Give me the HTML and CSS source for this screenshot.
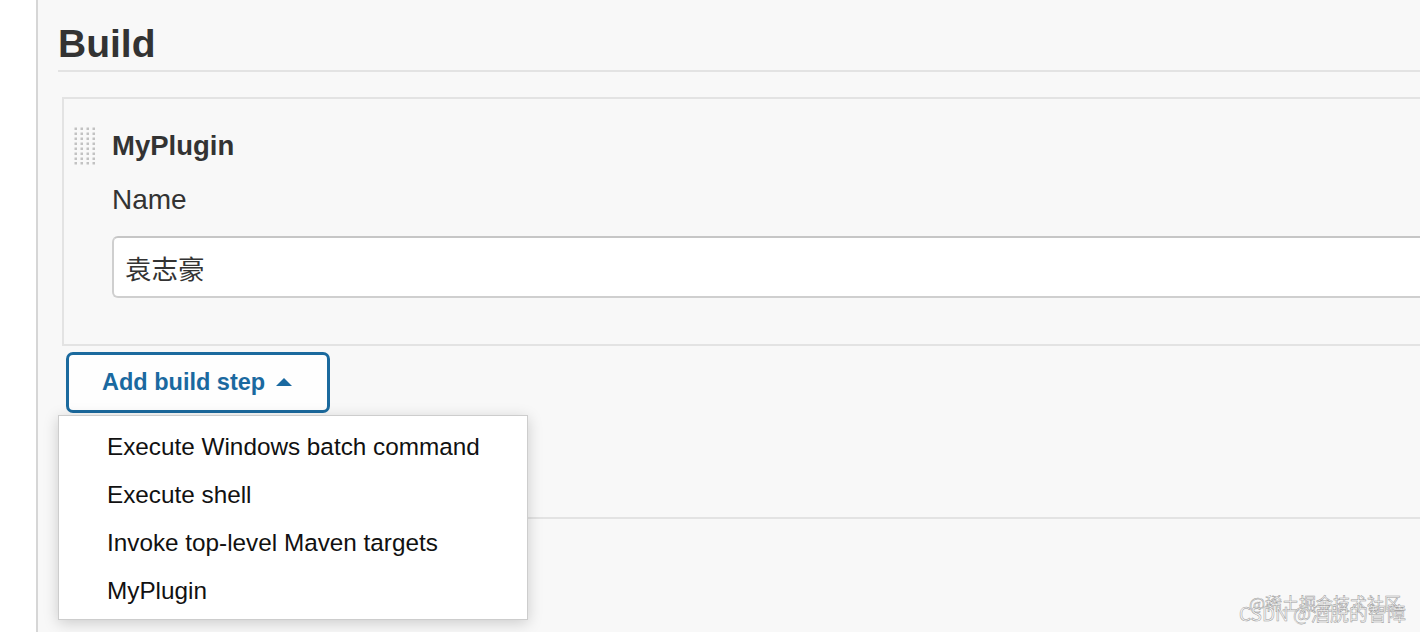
FILE: index.html
```html
<!DOCTYPE html>
<html lang="en">
<head>
<meta charset="utf-8">
<title>Build</title>
<link rel="stylesheet" href="styles.css">
</head>
<body>
<div class="layout">
  <aside class="sidebar"></aside>
  <main class="main">
    <h2 class="heading">Build</h2>
    <section class="panel">
      <div class="handle">
        <svg width="22" height="38" viewBox="0 0 22 38" aria-hidden="true">
          <g fill="#c2c2c2">
            <rect x="0.5" y="0.5" width="2.5" height="2.5"/><rect x="6.5" y="0.5" width="2.5" height="2.5"/><rect x="12.5" y="0.5" width="2.5" height="2.5"/><rect x="18.5" y="0.5" width="2.5" height="2.5"/>
            <rect x="0.5" y="5.5" width="2.5" height="2.5"/><rect x="6.5" y="5.5" width="2.5" height="2.5"/><rect x="12.5" y="5.5" width="2.5" height="2.5"/><rect x="18.5" y="5.5" width="2.5" height="2.5"/>
            <rect x="0.5" y="10.5" width="2.5" height="2.5"/><rect x="6.5" y="10.5" width="2.5" height="2.5"/><rect x="12.5" y="10.5" width="2.5" height="2.5"/><rect x="18.5" y="10.5" width="2.5" height="2.5"/>
            <rect x="0.5" y="15.5" width="2.5" height="2.5"/><rect x="6.5" y="15.5" width="2.5" height="2.5"/><rect x="12.5" y="15.5" width="2.5" height="2.5"/><rect x="18.5" y="15.5" width="2.5" height="2.5"/>
            <rect x="0.5" y="20.5" width="2.5" height="2.5"/><rect x="6.5" y="20.5" width="2.5" height="2.5"/><rect x="12.5" y="20.5" width="2.5" height="2.5"/><rect x="18.5" y="20.5" width="2.5" height="2.5"/>
            <rect x="0.5" y="25.5" width="2.5" height="2.5"/><rect x="6.5" y="25.5" width="2.5" height="2.5"/><rect x="12.5" y="25.5" width="2.5" height="2.5"/><rect x="18.5" y="25.5" width="2.5" height="2.5"/>
            <rect x="0.5" y="30.5" width="2.5" height="2.5"/><rect x="6.5" y="30.5" width="2.5" height="2.5"/><rect x="12.5" y="30.5" width="2.5" height="2.5"/><rect x="18.5" y="30.5" width="2.5" height="2.5"/>
            <rect x="0.5" y="35" width="2.5" height="2.5"/><rect x="6.5" y="35" width="2.5" height="2.5"/><rect x="12.5" y="35" width="2.5" height="2.5"/><rect x="18.5" y="35" width="2.5" height="2.5"/>
          </g>
        </svg>
      </div>
      <div class="panel-body">
        <div class="panel-title">MyPlugin</div>
        <div class="field-label">Name</div>
        <div class="text-input">袁志豪</div>
      </div>
    </section>
    <div class="step-add">
      <button class="add-button" type="button">
        <span>Add build step</span>
        <span class="caret"></span>
      </button>
      <ul class="menu">
        <li class="menu-item">Execute Windows batch command</li>
        <li class="menu-item">Execute shell</li>
        <li class="menu-item">Invoke top-level Maven targets</li>
        <li class="menu-item">MyPlugin</li>
      </ul>
    </div>
    <div class="divider"></div>
  </main>
</div>
<div class="watermark">
  <span class="wm-line wm-top">@稀土掘金技术社区</span>
  <span class="wm-line wm-bottom">CSDN @酒脱的智障</span>
</div>
</body>
</html>
```
FILE: styles.css
```css
html, body {
  margin: 0;
  padding: 0;
  overflow: hidden;
  height: 632px;
}

body {
  background: #ffffff;
  font-family: "Liberation Sans", Arial, "Noto Sans CJK SC", sans-serif;
  color: #333333;
  position: relative;
}

.layout {
  display: flex;
  width: 1560px;
  height: 632px;
}

.sidebar {
  width: 36px;
  flex: none;
  background: #ffffff;
  border-right: 2px solid #d6d6d6;
}

.main {
  flex: 1;
  background: #f8f8f8;
  padding: 21px 0 0 20px;
}

.heading {
  margin: 0;
  font-size: 39px;
  line-height: 46px;
  font-weight: 700;
  color: #333333;
  padding-bottom: 3px;
  border-bottom: 2px solid #e3e3e3;
}

.panel {
  margin: 25px 0 0 4px;
  border: 2px solid #e3e3e3;
  border-right: none;
  padding: 28px 0 46px 10px;
  display: flex;
  align-items: flex-start;
}

.handle {
  flex: none;
  width: 22px;
  height: 38px;
}

.handle svg {
  display: block;
}

.panel-body {
  flex: 1;
  margin-left: 16px;
  display: flex;
  flex-direction: column;
}

.panel-title {
  margin-top: 3px;
  font-size: 27.5px;
  line-height: 32px;
  font-weight: 700;
  color: #333333;
}

.field-label {
  margin-top: 22px;
  font-size: 28px;
  line-height: 32px;
  color: #333333;
}

.text-input {
  margin-top: 20px;
  height: 62px;
  box-sizing: border-box;
  background: #ffffff;
  border: 2px solid #cfcfcf;
  border-top-color: #c6c6c6;
  border-right: none;
  border-radius: 6px 0 0 6px;
  padding-left: 11px;
  display: flex;
  align-items: center;
  font-family: "Noto Sans CJK SC", sans-serif;
  font-size: 26.5px;
  color: #333333;
}

.step-add {
  position: relative;
  margin-top: 6px;
}

.add-button {
  margin-left: 8px;
  height: 61px;
  box-sizing: border-box;
  display: inline-flex;
  align-items: center;
  gap: 11px;
  padding: 0 35px 0 33px;
  background: #fefefe;
  border: 3px solid #1b6a9e;
  border-radius: 7px;
  font-family: "Liberation Sans", Arial, sans-serif;
  font-size: 23.5px;
  font-weight: 700;
  color: #1a69a0;
  cursor: pointer;
}

.caret {
  width: 0;
  height: 0;
  border-left: 8px solid transparent;
  border-right: 8px solid transparent;
  border-bottom: 8px solid #1a69a0;
  margin-top: -1px;
}

.menu {
  position: absolute;
  left: 0;
  top: 63px;
  width: 470px;
  box-sizing: border-box;
  margin: 0;
  padding: 7px 0 4px;
  list-style: none;
  background: #ffffff;
  border: 1px solid #cdcdcd;
  box-shadow: 0 3px 14px rgba(0, 0, 0, 0.18);
  z-index: 5;
}

.menu-item {
  height: 48px;
  line-height: 48px;
  padding-left: 48px;
  font-size: 24.3px;
  color: #111111;
  white-space: nowrap;
}

.divider {
  margin-top: 104px;
  border-top: 2px solid #e3e3e3;
}

.watermark {
  position: absolute;
  right: 14px;
  bottom: 9px;
  width: 175px;
  height: 30px;
  font-family: "Noto Sans CJK SC", sans-serif;
  pointer-events: none;
}

.wm-line {
  position: absolute;
  white-space: nowrap;
  color: rgba(250, 250, 250, 0.9);
  -webkit-text-stroke: 0.5px #9a9a9a;
}

.wm-top {
  right: 5px;
  top: 0;
  font-size: 17px;
  line-height: 20px;
}

.wm-bottom {
  right: 0;
  top: 9px;
  font-size: 19px;
  line-height: 22px;
}
```
